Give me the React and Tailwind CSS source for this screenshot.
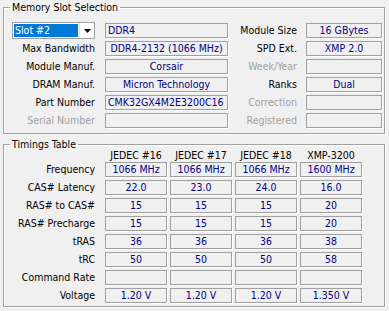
import React from 'react'

const box = 'h-[15px] border border-[#a0a0a0] shadow-[1px_1px_0_#fff] flex items-center text-[#000080] whitespace-nowrap overflow-hidden'

function Field({ w, left, children }) {
  return (
    <div className={`${box} ${w} ${left ? 'justify-start pl-[2px]' : 'justify-center'}`}>
      {children}
    </div>
  )
}

function Label({ w, dim, children }) {
  return (
    <div className={`${w} text-right whitespace-nowrap ${dim ? 'text-[#a0a0a0]' : 'text-black'}`}>
      {children}
    </div>
  )
}

const slotRows = [
  { l: 'Max Bandwidth', v: 'DDR4-2132 (1066 MHz)', r: 'SPD Ext.', rv: 'XMP 2.0' },
  { l: 'Module Manuf.', v: 'Corsair', r: 'Week/Year', rv: '', rdim: true },
  { l: 'DRAM Manuf.', v: 'Micron Technology', r: 'Ranks', rv: 'Dual' },
  { l: 'Part Number', v: 'CMK32GX4M2E3200C16', left: true, r: 'Correction', rv: '', rdim: true },
  { l: 'Serial Number', v: '', dim: true, r: 'Registered', rv: '', rdim: true },
]

const timings = [
  ['Frequency', '1066 MHz', '1066 MHz', '1066 MHz', '1600 MHz'],
  ['CAS# Latency', '22.0', '23.0', '24.0', '16.0'],
  ['RAS# to CAS#', '15', '15', '15', '20'],
  ['RAS# Precharge', '15', '15', '15', '20'],
  ['tRAS', '36', '36', '36', '38'],
  ['tRC', '50', '50', '50', '58'],
  ['Command Rate', '', '', '', ''],
  ['Voltage', '1.20 V', '1.20 V', '1.20 V', '1.350 V'],
]

const groupBox = 'ml-[3px] w-[382px] border border-[#a0a0a0] shadow-[1px_1px_0_#fff,inset_1px_1px_0_#fff]'

export default function App() {
  return (
    <div className="w-[389px] h-[311px] bg-[#f0f0f0] pt-[1px] text-[10.5px] leading-[13px] font-[family-name:'DejaVu_Sans_Condensed','DejaVu_Sans',sans-serif] font-stretch-condensed overflow-hidden">
      {/* Memory slot selection */}
      <fieldset className={`${groupBox} pt-[9px] pb-[5px]`}>
        <legend className="ml-[6px] px-[2px] text-black">Memory Slot Selection</legend>
        <div className="flex flex-col gap-[3px]">
          <div className="flex items-center h-[15px]">
            <div className="ml-[8px] w-[83px] h-[17px] border border-[#a0a0a0] bg-white flex">
              <div className="flex-1 m-[1px] bg-[#0078d7] text-white pl-[1px] flex items-center">Slot #2</div>
              <div className="w-[15px] flex items-center justify-center border-l border-[#e0e0e0]">
                <svg width="7" height="4" viewBox="0 0 7 4"><path d="M0 0h7L3.5 4z" fill="#000" /></svg>
              </div>
            </div>
            <div className="ml-[10px]"><Field w="w-[123px]" left>DDR4</Field></div>
            <Label w="w-[69px]">Module Size</Label>
            <div className="ml-[9px]"><Field w="w-[76px]">16 GBytes</Field></div>
          </div>
          {slotRows.map((r) => (
            <div key={r.l} className="flex items-center h-[15px]">
              <Label w="w-[91px]" dim={r.dim}>{r.l}</Label>
              <div className="ml-[10px]"><Field w="w-[123px]" left={r.left}>{r.v}</Field></div>
              <Label w="w-[69px]" dim={r.rdim}>{r.r}</Label>
              <div className="ml-[9px]"><Field w="w-[76px]">{r.rv}</Field></div>
            </div>
          ))}
        </div>
      </fieldset>

      {/* Timings table */}
      <fieldset className={`${groupBox} mt-[4px] pb-[3px]`}>
        <legend className="ml-[6px] px-[2px] text-black">Timings Table</legend>
        <div className="flex h-[11px] items-end">
          <div className="w-[101px]" />
          <div className="flex gap-[3px] text-black">
            {['JEDEC #16', 'JEDEC #17', 'JEDEC #18', 'XMP-3200'].map((h) => (
              <div key={h} className="w-[62px] text-center whitespace-nowrap">{h}</div>
            ))}
          </div>
        </div>
        <div className="flex flex-col gap-[3px]">
          {timings.map(([label, ...vals]) => (
            <div key={label} className="flex items-center h-[15px]">
              <Label w="w-[91px]">{label}</Label>
              <div className="ml-[10px] flex gap-[3px]">
                {vals.map((v, i) => (
                  <Field key={i} w="w-[62px]">{v}</Field>
                ))}
              </div>
            </div>
          ))}
        </div>
      </fieldset>
    </div>
  )
}
